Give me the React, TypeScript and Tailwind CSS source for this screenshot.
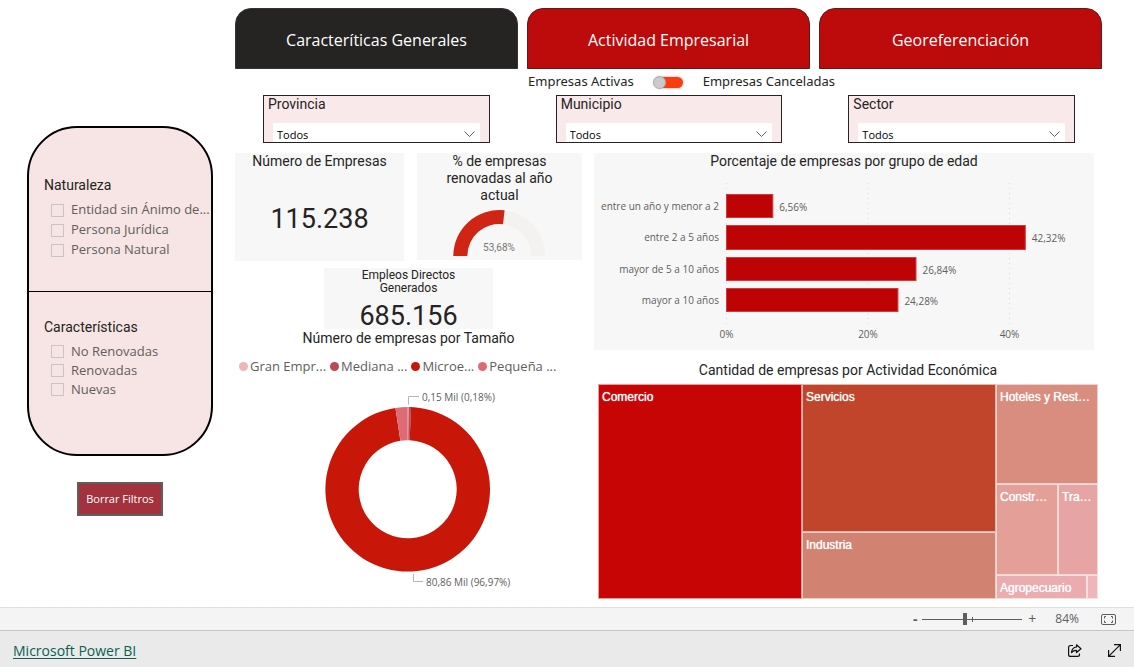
import { useId, useState } from "react";
import type { ReactNode } from "react";

const tabs = ["Caracteríticas Generales", "Actividad Empresarial", "Georeferenciación"];

const ageGroups = [
  { label: "entre un año y menor a 2", value: 6.56, text: "6,56%", y: 24, h: 24 },
  { label: "entre 2 a 5 años", value: 42.32, text: "42,32%", y: 55, h: 25 },
  { label: "mayor de 5 a 10 años", value: 26.84, text: "26,84%", y: 87, h: 24 },
  { label: "mayor a 10 años", value: 24.28, text: "24,28%", y: 118, h: 24 },
];

const sizes = [
  { label: "Gran Empr...", share: 0.18, fill: "#efb5b9", dot: "bg-[#efb5b9]" },
  { label: "Mediana ...", share: 0.47, fill: "#b74a57", dot: "bg-[#b74a57]" },
  { label: "Microe...", share: 96.97, fill: "#c81608", dot: "bg-[#c81608]" },
  { label: "Pequeña ...", share: 2.38, fill: "#dd6b75", dot: "bg-[#dd6b75]" },
];

function ringSlice(cx: number, cy: number, r: number, inner: number, from: number, to: number) {
  const at = (radius: number, turn: number) => {
    const a = turn * 2 * Math.PI;
    return `${(cx + radius * Math.sin(a)).toFixed(2)} ${(cy - radius * Math.cos(a)).toFixed(2)}`;
  };
  const large = to - from > 0.5 ? 1 : 0;
  return `M${at(r, from)}A${r} ${r} 0 ${large} 1 ${at(r, to)}L${at(inner, to)}A${inner} ${inner} 0 ${large} 0 ${at(inner, from)}Z`;
}

function Title({ children }: { children: ReactNode }) {
  return <h2 className="text-center text-[14px] leading-[17px] text-[#252423]">{children}</h2>;
}

function CheckList({ title, items, rowClass }: { title: string; items: string[]; rowClass: string }) {
  return (
    <fieldset className="pl-[15px]">
      <legend className="text-[14px] leading-[18px] text-[#252423]">{title}</legend>
      <div className="pt-[6px] pl-[7px]">
        {items.map((item) => (
          <label
            key={item}
            className={`flex items-center gap-[7px] font-['Open_Sans',sans-serif] text-[13px] text-[#605e5c] ${rowClass}`}
          >
            <input
              type="checkbox"
              className="size-[13px] shrink-0 appearance-none border border-[#c8c6c4] checked:bg-[#605e5c]"
            />
            <span className="whitespace-nowrap">{item}</span>
          </label>
        ))}
      </div>
    </fieldset>
  );
}

function Slicer({ label }: { label: string }) {
  const id = useId();
  return (
    <div className="flex h-12 flex-col justify-between border border-[#252423] bg-[#fae9eb] pr-[9px] pl-1">
      <label htmlFor={id} className="text-[14px] leading-[17px] text-[#252423]">
        {label}
      </label>
      <div className="relative ml-[5px]">
        <select
          id={id}
          className="block h-[19px] w-full appearance-none bg-white pt-1 pl-1 font-['Open_Sans',sans-serif] text-[11px] leading-[15px] text-black"
        >
          <option>Todos</option>
        </select>
        <svg
          className="pointer-events-none absolute top-[7px] right-[5px] h-[8px] w-[11px]"
          viewBox="0 0 11 8"
          fill="none"
          stroke="#605e5c"
        >
          <path d="M0.5 1.5L5.5 6.5L10.5 1.5" />
        </svg>
      </div>
    </div>
  );
}

function Gauge() {
  return (
    <svg viewBox="0 0 165 48" className="mt-[5px] block w-full" role="img" aria-label="53,68%">
      <path d={ringSlice(82.3, 47, 46, 32, -0.25, 0.25)} fill="#f3f2f1" />
      <path d={ringSlice(82.3, 47, 46, 32, -0.25, 0.0184)} fill="#d02515" />
      <text x="82" y="42" textAnchor="middle" fontSize="10" fill="#777573">
        53,68%
      </text>
    </svg>
  );
}

function AgeChart() {
  return (
    <svg viewBox="0 0 500 180" className="block w-full font-['Open_Sans',sans-serif]" fontSize="10" fill="#605e5c">
      {[0, 20, 40].map((tick) => (
        <g key={tick}>
          <line
            x1={132.5 + tick * 7.075}
            x2={132.5 + tick * 7.075}
            y1="13"
            y2="156"
            stroke="#dcdad8"
            strokeDasharray="1 4"
          />
          <text x={132.5 + tick * 7.075} y="168" textAnchor="middle">
            {tick}%
          </text>
        </g>
      ))}
      {ageGroups.map((g) => (
        <g key={g.label}>
          <text x="125" y={g.y + 16} textAnchor="end">
            {g.label}
          </text>
          <rect x="132.5" y={g.y + 0.5} width={g.value * 7.06} height={g.h - 1} fill="#bd0303" stroke="#d2393b" />
          <text x={139 + g.value * 7.06} y={g.y + 17}>
            {g.text}
          </text>
        </g>
      ))}
    </svg>
  );
}

function DonutChart() {
  let start = 0;
  return (
    <svg viewBox="0 2 347 204" className="block w-full font-['Open_Sans',sans-serif]" fontSize="10" fill="#605e5c">
      {sizes.map((s) => {
        const from = start;
        start += s.share / 100;
        return <path key={s.label} d={ringSlice(172.7, 105.3, 82.3, 49, from, start)} fill={s.fill} />;
      })}
      <path d="M173.5 20.5V12.5H184M178.5 190V197.5H188" fill="none" stroke="#b8b6b4" />
      <text x="187" y="17">
        0,15 Mil (0,18%)
      </text>
      <text x="191" y="202">
        80,86 Mil (96,97%)
      </text>
    </svg>
  );
}

function Cell({ name, className }: { name?: string; className: string }) {
  return (
    <div
      className={`min-w-0 overflow-hidden border border-white/60 pt-[5px] pl-[3px] font-['Liberation_Sans',Arial,sans-serif] text-[12px] leading-[14px] whitespace-nowrap text-white [text-shadow:0_0_1px_white] ${className}`}
    >
      {name}
    </div>
  );
}

function Treemap() {
  return (
    <div className="grid h-[215px] grid-cols-[204fr_194fr_102fr]">
      <Cell name="Comercio" className="bg-[#c80505]" />
      <div className="grid min-w-0 grid-rows-[148fr_67fr]">
        <Cell name="Servicios" className="bg-[#c0452b]" />
        <Cell name="Industria" className="bg-[#d28270]" />
      </div>
      <div className="grid min-w-0 grid-rows-[100fr_91fr_24fr]">
        <Cell name="Hoteles y Rest…" className="bg-[#d98d7e]" />
        <div className="grid grid-cols-[62fr_40fr]">
          <Cell name="Constr…" className="bg-[#e39f98]" />
          <Cell name="Tra…" className="bg-[#e6a4a4]" />
        </div>
        <div className="grid grid-cols-[91fr_11fr]">
          <Cell name="Agropecuario" className="bg-[#eaacae]" />
          <Cell className="bg-[#efb5b9]" />
        </div>
      </div>
    </div>
  );
}

export default function App() {
  const [tab, setTab] = useState(0);
  return (
    <div className="flex min-h-screen flex-col bg-white font-[Roboto,sans-serif] text-[#252423]">
      <main className="flex flex-1 pr-8 pb-2 pl-[27px]">
        <aside className="flex w-[186px] shrink-0 flex-col items-center pt-[126px]">
          <div className="w-full overflow-hidden rounded-[50px] border-2 border-black bg-[#f7e4e4]">
            <div className="h-[164px] border-b border-black pt-12">
              <CheckList
                title="Naturaleza"
                items={["Entidad sin Ánimo de...", "Persona Jurídica", "Persona Natural"]}
                rowClass="h-5"
              />
            </div>
            <div className="h-[162px] pt-[26px]">
              <CheckList title="Características" items={["No Renovadas", "Renovadas", "Nuevas"]} rowClass="h-[19px]" />
            </div>
          </div>
          <button
            type="button"
            className="mt-[26px] h-[34px] border-2 border-[#605e5c] bg-[#a4323e] px-[7px] font-['Open_Sans',sans-serif] text-[11px] whitespace-nowrap text-white"
          >
            Borrar Filtros
          </button>
        </aside>

        <div className="ml-[22px] min-w-0 flex-1 pt-2">
          <nav className="grid grid-cols-3 gap-[9px] font-['Open_Sans',sans-serif]">
            {tabs.map((name, i) => (
              <button
                key={name}
                type="button"
                onClick={() => setTab(i)}
                className={`h-[61px] rounded-t-2xl border pt-[3px] text-[16px] text-white ${
                  tab === i ? "border-[#353433] bg-[#252423]" : "border-[#5a1c1c] bg-[#bd0a0b]"
                }`}
              >
                {name}
              </button>
            ))}
          </nav>

          <div className="flex h-[26px] items-center justify-center pl-[26px] font-['Noto_Sans',sans-serif] text-[13px]">
            <span>Empresas Activas</span>
            <label className="relative mx-5 flex pt-px">
              <input
                type="checkbox"
                role="switch"
                aria-label="Empresas Canceladas"
                className="peer h-[11px] w-[29px] appearance-none rounded-full bg-[#f93d10] shadow-[0_0_2px_1px_#d6d4d2]"
              />
              <span className="absolute top-px left-0 size-[11px] rounded-full bg-[#cbc9c9] ring-1 ring-[#b0aeae] peer-checked:left-[18px]" />
            </label>
            <span>Empresas Canceladas</span>
          </div>

          <div className="grid grid-cols-3 gap-[66px] pr-[27px] pl-7">
            <Slicer label="Provincia" />
            <Slicer label="Municipio" />
            <Slicer label="Sector" />
          </div>

          <div className="mt-[10px] grid grid-cols-[347fr_508fr] gap-3">
            <div className="min-w-0">
              <div className="grid grid-cols-[169fr_165fr] gap-[13px]">
                <section className="h-[108px] bg-[#f7f7f7]">
                  <Title>Número de Empresas</Title>
                  <p className="pt-8 text-center text-[27px] leading-[34px]">115.238</p>
                </section>
                <section className="h-[107px] bg-[#f7f7f7]">
                  <Title>
                    % de empresas
                    <br />
                    renovadas al año
                    <br />
                    actual
                  </Title>
                  <Gauge />
                </section>
              </div>
              <section className="mx-auto mt-[7px] h-[61px] w-[169px] bg-[#f7f7f7] pt-px text-center">
                <h2 className="text-[12px] leading-[13px]">
                  Empleos Directos
                  <br />
                  Generados
                </h2>
                <p className="pt-1 text-[27px] leading-[34px]">685.156</p>
              </section>
              <div className="pt-px">
                <Title>Número de empresas por Tamaño</Title>
              </div>
              <ul className="flex h-[39px] items-center gap-1 pl-1 font-['Open_Sans',sans-serif] text-[13px] whitespace-nowrap text-[#605e5c]">
                {sizes.map((s) => (
                  <li key={s.label} className="flex items-center gap-[2px]">
                    <span className={`size-[9px] rounded-full ${s.dot}`} />
                    {s.label}
                  </li>
                ))}
              </ul>
              <DonutChart />
            </div>

            <div className="min-w-0">
              <section className="mr-2 bg-[#f7f7f7]">
                <Title>Porcentaje de empresas por grupo de edad</Title>
                <AgeChart />
              </section>
              <section className="mx-1 mt-3">
                <Title>Cantidad de empresas por Actividad Económica</Title>
                <div className="pt-[5px]">
                  <Treemap />
                </div>
              </section>
            </div>
          </div>
        </div>
      </main>

      <div className="flex h-[23px] items-center justify-end border-t border-[#e1dfdd] bg-[#f4f4f4] pr-[18px] font-['Open_Sans',sans-serif] text-[12px] text-[#605e5c]">
        <button type="button" aria-label="Alejar" className="w-[14px] text-[14px] leading-none font-bold">
          -
        </button>
        <div className="relative flex w-[100px] items-center">
          <span className="absolute inset-x-0 top-1/2 h-px bg-[#605e5c]" />
          <span className="absolute top-1/2 left-1/2 h-[5px] w-px -translate-y-[2px] bg-[#605e5c]" />
          <input
            type="range"
            aria-label="Zoom"
            min={0}
            max={200}
            defaultValue={84}
            className="relative h-3 w-full appearance-none bg-transparent [&::-webkit-slider-thumb]:h-3 [&::-webkit-slider-thumb]:w-1 [&::-webkit-slider-thumb]:appearance-none [&::-webkit-slider-thumb]:bg-[#605e5c]"
          />
        </div>
        <button type="button" aria-label="Acercar" className="w-5 text-[14px] leading-none">
          +
        </button>
        <span className="ml-[13px]">84%</span>
        <button type="button" aria-label="Ajustar a la página" className="ml-[22px]">
          <svg className="h-[11px] w-[15px]" viewBox="0 0 15 11" fill="none" stroke="#605e5c">
            <rect x="0.5" y="0.5" width="14" height="10" rx="1.5" />
            <path d="M5 2.5H3.5V4.5M10 2.5H11.5V4.5M5 8.5H3.5V6.5M10 8.5H11.5V6.5" />
          </svg>
        </button>
      </div>

      <footer className="flex h-[37px] items-center justify-between border-t border-[#c8c6c4] bg-[#eaeaea] pt-[3px] pr-[13px] pl-[13px]">
        <a href="#powerbi" className="font-['Open_Sans',sans-serif] text-[14px] text-[#0b5f53] underline underline-offset-2">
          Microsoft Power BI
        </a>
        <div className="flex items-center gap-[26px]">
          <button type="button" aria-label="Compartir">
            <svg className="h-[13px] w-[14px]" viewBox="0 0 14 13" fill="none" stroke="#111" strokeWidth="1.2" strokeLinejoin="round">
              <path d="M5 1.5H2.5Q0.6 1.5 0.6 3.5V10.4Q0.6 12.4 2.5 12.4H9.5Q11.5 12.4 11.5 10.5V9.5" />
              <path d="M8.5 0.8L13 4.7L8.5 8.5V6.3Q5.5 6.2 3.5 8.5Q4 3.5 8.5 3Z" />
            </svg>
          </button>
          <button type="button" aria-label="Pantalla completa">
            <svg className="size-[13px]" viewBox="0 0 13 13" fill="none" stroke="#111" strokeWidth="1.2">
              <path d="M6 0.6H12.4V7M0.6 6V12.4H7M12.4 0.6L0.6 12.4" />
            </svg>
          </button>
        </div>
      </footer>
    </div>
  );
}
